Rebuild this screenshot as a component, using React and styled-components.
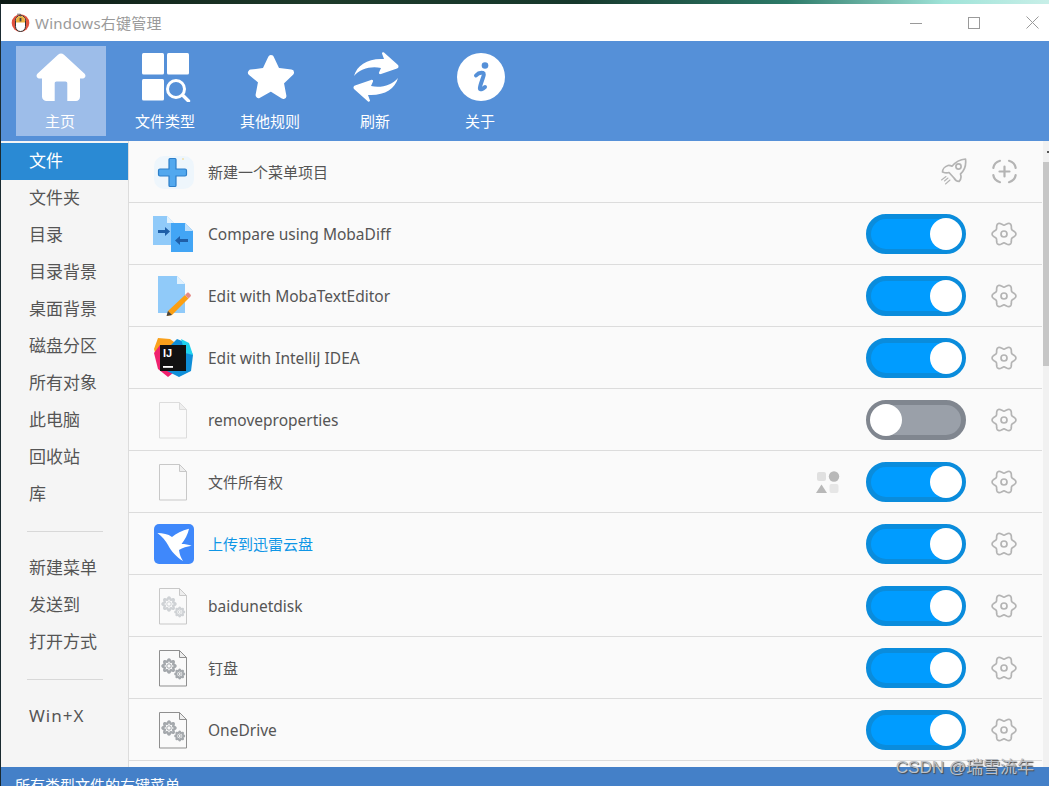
import React from "react";
import styled, { createGlobalStyle } from "styled-components";

const FONT = `"Noto Sans", "Noto Sans CJK SC", sans-serif`;

const isLatin = (s) => /^[\x00-\x7f]+$/.test(s);

const Global = createGlobalStyle`
  html, body { margin: 0; padding: 0; height: 100%; overflow: hidden; background: #10261d; }
  * { box-sizing: border-box; }
`;

const Page = styled.div`
  position: relative;
  width: 1049px;
  height: 786px;
  overflow: hidden;
  font-family: ${FONT};
  display: flex;
  flex-direction: column;
  background: #1a2a30;
`;
const Wallpaper = styled.div`
  height: 4px;
  flex: none;
  background: linear-gradient(90deg, #0c1a14 0%, #1d3a2a 30%, #16382c 55%, #2c7a68 75%, #9fe3d8 90%, #c8efe8 100%);
`;
const Win = styled.div`
  flex: 1;
  min-height: 0;
  margin-left: 1px;
  display: flex;
  flex-direction: column;
`;
const TitleBar = styled.div`
  height: 37px;
  flex: none;
  background: #fff;
  display: flex;
  align-items: center;
  padding-left: 10px;
`;
const AppTitle = styled.span`
  margin-left: 5px;
  font-size: 15px;
  letter-spacing: .25px;
  color: #9a9a9a;
`;
const WinButtons = styled.div`
  margin-left: auto;
  display: flex;
  align-items: center;
  gap: 46px;
  padding-right: 10px;
`;
const Toolbar = styled.div`
  height: 100px;
  flex: none;
  background: #5590d8;
  display: flex;
  gap: 15px;
  padding: 5px 0 0 15px;
`;
const Tool = styled.div`
  width: 90px;
  height: 90px;
  display: flex;
  flex-direction: column;
  align-items: center;
  color: #fff;
  font-size: 15px;
  padding-top: 6px;
  background: ${({ $active }) => ($active ? "#9dbde9" : "transparent")};
`;
const ToolIcon = styled.div`
  width: 50px;
  height: 50px;
  display: flex;
  align-items: center;
  justify-content: center;
`;
const ToolLabel = styled.span`
  margin: 9px 2px 0 0;
  line-height: 20px;
`;
const Body = styled.div`
  flex: 1;
  min-height: 0;
  display: flex;
  overflow: hidden;
`;
const Sidebar = styled.div`
  width: 128px;
  flex: none;
  background: #f5f5f5;
  border-right: 1px solid #dcdcdc;
  padding-top: 2px;
`;
const NavItem = styled.div`
  height: 37px;
  line-height: 35px;
  padding-left: 28px;
  font-size: 17px;
  letter-spacing: ${({ $latin }) => ($latin ? "1px" : "0")};
  color: ${({ $active }) => ($active ? "#fff" : "#555")};
  background: ${({ $active }) => ($active ? "#2a8ad4" : "transparent")};
`;
const NavRule = styled.div`
  height: 1px;
  margin: 18px 25px 18px 26px;
  background: #d8d8d8;
`;
const Content = styled.div`
  flex: 1;
  min-width: 0;
  background: #fafafa;
`;
const Row = styled.div`
  height: 62px;
  display: flex;
  align-items: center;
  border-bottom: 1px solid #dcdcdc;
  padding-left: 24px;
`;
const RowIcon = styled.div`
  width: 42px;
  height: 42px;
  flex: none;
  display: flex;
  align-items: center;
  justify-content: center;
`;
const RowText = styled.span`
  margin-left: 13px;
  font-size: ${({ $latin }) => ($latin ? "15.5px" : "15px")};
  color: ${({ $link }) => ($link ? "#0f96e6" : "#555")};
`;
const RowTail = styled.div`
  margin-left: auto;
  display: flex;
  align-items: center;
  padding-right: 25px;
`;
const Badge = styled.div`
  margin-right: 26px;
  display: flex;
`;
const RocketSlot = styled.div`
  margin-right: 25px;
  display: flex;
`;
const Toggle = styled.div`
  width: 100px;
  height: 40px;
  border-radius: 20px;
  border: 5px solid ${({ $on }) => ($on ? "#0a8cdc" : "#80868f")};
  background: ${({ $on }) => ($on ? "#009cff" : "#9aa0a9")};
  display: flex;
  align-items: center;
  justify-content: ${({ $on }) => ($on ? "flex-end" : "flex-start")};
  margin-right: 25px;
`;
const Knob = styled.div`
  width: 32px;
  height: 32px;
  border-radius: 50%;
  background: #fff;
  margin: 0 -1px;
`;
const Scrollbar = styled.div`
  width: 7px;
  flex: none;
  background: #f1f1f1;
  border-left: 1px solid #fafafa;
`;
const ScrollArrow = styled.div`
  height: 21px;
  display: flex;
  align-items: center;
  justify-content: flex-end;
  &::after {
    content: "";
    width: 2px;
    height: 2px;
    background: #555;
  }
`;
const Thumb = styled.div`
  height: 204px;
  background: #c6c6c6;
`;
const StatusBar = styled.div`
  height: 19px;
  flex: none;
  background: #4480c8;
  color: #fff;
  font-size: 15px;
  line-height: 36px;
  padding-left: 14px;
  overflow: hidden;
`;
const Watermark = styled.div`
  position: absolute;
  right: 15px;
  bottom: 8px;
  font-family: "Liberation Sans", "Noto Sans CJK SC", sans-serif;
  font-size: 17px;
  line-height: 20px;
  color: #bcc0c6;
  text-shadow: 1px 1px 1px #4a4a4a;
`;

// lobed outline, used for the settings cog and for the little gears on file icons
const cogPath = (cx, cy, r, amp, n, phase = 0) => {
  const pts = [];
  for (let i = 0; i < 120; i++) {
    const t = (i / 120) * Math.PI * 2;
    const rr = r + amp * Math.cos(n * t + phase);
    pts.push(`${(cx + rr * Math.cos(t)).toFixed(2)} ${(cy + rr * Math.sin(t)).toFixed(2)}`);
  }
  return `M${pts.join("L")}Z`;
};

const Logo = () => (
  <svg width="19" height="19" viewBox="0 0 19 19">
    <circle cx="9.500" cy="10" r="8.800" fill="#e2533f" />
    <path d="M4.500 7.500a5 5 0 0 1 10 0v6a5 5 0 0 1-10 0z" fill="#fff" stroke="#333" strokeWidth="1" />
    <path d="M5 7.500a4.500 4.500 0 0 1 9 0v2H5z" fill="#eeb23e" />
    <rect x="8.600" y="5" width="1.800" height="3.400" fill="#444" />
    <path d="M9.500 3.500V1.200H6" stroke="#555" strokeWidth=".8" fill="none" />
  </svg>
);

const HomeIcon = () => (
  <svg width="50" height="50" viewBox="0 0 50 50">
    <path
      fill="#fff"
      d="M25 1.500c1 0 2 .4 3 1.300l20.600 19c1.700 1.700.7 4.600-1.700 4.600H44v18.300c0 2.300-1.700 4.300-4 4.300h-8.700V31.400c0-1-.8-1.800-1.800-1.800h-9c-1 0-1.800.8-1.800 1.800V48.900H10c-2.300 0-4-2-4-4.300V26.400H3.100c-2.400 0-3.400-2.900-1.700-4.600L22 2.800c1-.9 2-1.300 3-1.300z"
    />
  </svg>
);
const TypesIcon = () => (
  <svg width="50" height="50" viewBox="0 0 50 50" fill="#fff">
    <rect x="1" y="1" width="22" height="21.500" rx="1.500" />
    <rect x="26" y="1" width="22" height="21.500" rx="1.500" />
    <rect x="1" y="27" width="22" height="21.500" rx="1.500" />
    <circle cx="35" cy="37" r="8.500" fill="none" stroke="#fff" strokeWidth="3" />
    <path d="M42 43.500l5.500 5.500" stroke="#fff" strokeWidth="3.400" strokeLinecap="round" />
  </svg>
);
const StarIcon = () => (
  <svg width="50" height="50" viewBox="0 0 50 50">
    <path
      fill="#fff"
      stroke="#fff"
      strokeWidth="6"
      strokeLinejoin="round"
      d="M25 6l6 12.800 14 1.800-10.200 9.600 2.600 13.800L25 36.200 12.600 43l2.600-13.800L5 20.600l14-1.800z"
    />
  </svg>
);
const arrowArc =
  "M3 24C6 13 17 6 33 7L31 1.500C31 .5 32 0 33 .5L47 13C48 14.500 47.500 16 46 16.500L30 22C28.500 22.500 27.500 21.500 28 20.500L30 16C20 13.500 9 17 3 24Z";
const RefreshIcon = () => (
  <svg width="50" height="50" viewBox="0 0 50 50" fill="#fff">
    <path d={arrowArc} />
    <path d={arrowArc} transform="rotate(180 25 25)" />
  </svg>
);
const InfoIcon = () => (
  <svg width="50" height="50" viewBox="0 0 50 50">
    <circle cx="25" cy="25" r="24" fill="#fff" />
    <circle cx="29" cy="13.500" r="3.300" fill="#5590d8" />
    <path
      d="M20 23.500c2-2.200 5-3 7-2.500 1.200.4 1 2-.3 5.500-1.200 3.500-3 8-2.800 10 .1 1.400 2.500 1 5.100-1.500"
      fill="none"
      stroke="#5590d8"
      strokeWidth="4"
      strokeLinecap="round"
    />
  </svg>
);

const PlusArt = () => (
  <svg width="42" height="42" viewBox="0 0 42 42">
    <rect x="1" y="5" width="40" height="33" rx="10" fill="#eef6fc" />
    <circle cx="30" cy="8" r="1" fill="#f2dfa8" />
    <path
      d="M17 7.500h5c.8 0 1 .5 1 1V18h9c1 0 1.500.5 1.500 1.500v4c0 1-.5 1.500-1.500 1.500h-9v9.500c0 .7-.3 1-1 1h-5c-.8 0-1-.3-1-1V25H7c-1 0-1.500-.5-1.500-1.500v-4C5.500 18.500 6 18 7 18h9V8.500c0-.5.2-1 1-1z"
      fill="#52a8ee"
      stroke="#2d7fc9"
      strokeWidth="1.200"
    />
  </svg>
);
const CompareArt = () => (
  <svg width="42" height="42" viewBox="0 0 42 42">
    <path d="M0 3h14l7 7v22H0z" fill="#90caf9" />
    <path d="M14 3l7 7h-7z" fill="#e3f2fd" />
    <path d="M18 10h14l8 8v21H18z" fill="#42a5f5" />
    <path d="M32 10l8 8h-8z" fill="#bbdefb" />
    <path d="M5 17h7v-3l5 4.500-5 4.500v-3H5z" fill="#1f5fa8" />
    <path d="M35 26h-8v-3l-5 4.500 5 4.500v-3h8z" fill="#1f5fa8" />
  </svg>
);
const EditArt = () => (
  <svg width="42" height="42" viewBox="0 0 42 42">
    <path d="M5 1h19l8 8v29H5z" fill="#90caf9" />
    <path d="M24 1l8 8h-8z" fill="#e3f2fd" />
    <path d="M15 36l17-16 3.500 3.500L19 40l-5 1z" fill="#fb9f12" />
    <path d="M32 20l2-2c.6-.6 1.400-.6 2 0l1.500 1.500c.6.6.6 1.400 0 2l-2 2z" fill="#e58a85" />
    <path d="M15 36l-1.500 5 5.500-1z" fill="#444" />
  </svg>
);
const IdeaArt = () => (
  <svg width="42" height="42" viewBox="0 0 42 42">
    <path d="M5 1l12 1 8 6-4 16-16 2-4-14z" fill="#f9a01b" />
    <path d="M1 16l6-8 14 4 4 20-10 8-10-8z" fill="#f0216e" />
    <path d="M24 2l10 4 6 12-2 16-12 6-12-6 2-24z" fill="#0f8ed8" />
    <path d="M28 2l8 4 4 12-8-2z" fill="#1fd3f0" />
    <rect x="7" y="8" width="26" height="26" fill="#111" />
    <rect x="10" y="29" width="10" height="1.800" fill="#fff" />
    <text x="10" y="20" fontFamily="Liberation Sans, sans-serif" fontWeight="700" fontSize="11" fill="#fff">IJ</text>
  </svg>
);
const FileArt = ({ line = "#c8c8c8", gears, gearColor = "#b8bcc0" }) => (
  <svg width="42" height="42" viewBox="0 0 42 42">
    <path d="M6.500 3.500h20l7 7v28.500h-27z" fill="#fafafa" stroke={line} />
    <path d="M26.500 3.500v7h7z" fill="#eee" stroke={line} />
    {gears && (
      <g fill="none" stroke={gearColor}>
        <path d={cogPath(16, 19, 5.500, 1.100, 8)} strokeWidth="2.200" />
        <circle cx="16" cy="19" r="2.200" strokeWidth="1" />
        <path d={cogPath(26.700, 27, 3.800, .8, 8)} strokeWidth="1.800" />
        <circle cx="26.700" cy="27" r="1.400" strokeWidth=".9" />
      </g>
    )}
  </svg>
);
const ThunderArt = () => (
  <svg width="40" height="40" viewBox="0 0 40 40">
    <rect width="40" height="40" rx="5" fill="#3f88fb" />
    <path
      fill="#fff"
      d="M3.400 9C9 9 14 10 18 13 22 9.500 28 6.500 35 4.700 34 10 31 15.500 27.500 20 31 20 34.500 20.500 37.600 21.700 33 22.500 28.500 23.800 25 26 25.500 30 27 34 29 37 22.500 33 17 27 14 21 12 17 8 12.500 3.400 9Z"
    />
  </svg>
);
const Rocket = () => (
  <svg width="27" height="27" viewBox="0 0 27 27" fill="none" stroke="#b4b4b4" strokeWidth="1.700" strokeLinejoin="round" strokeLinecap="round">
    <path d="M25.500 1c.8 6-1 11.500-5 15 .8 2.500.8 5.500-1.500 7.500-1.800-.2-4-1.500-5-3.500l-5-5.500c-2 .8-3.500.6-6.500-.5 0-2.500 2-5.500 5.500-6.500 1.500-.2 2.500 0 4 .7C15.500 4 20 1.500 25.500 1z" />
    <circle cx="18.500" cy="8.500" r="2.600" />
    <path d="M8 20l-3.500 3M10 22l-4.500 4M6 18.500l-4.500 3.500" strokeWidth="1.100" />
  </svg>
);
const PlusRing = () => (
  <svg width="25" height="25" viewBox="0 0 25 25" fill="none" stroke="#b4b4b4" strokeWidth="2.200" strokeLinecap="round">
    <path d="M8 1.800C4 3 1.800 5.500 1.300 9M17 1.800c4 1.200 6.200 3.700 6.700 7.200M1.300 16c.5 3.500 2.700 6 6.700 7.200M23.700 16c-.5 3.500-2.700 6-6.700 7.200" />
    <path d="M12.500 7.500v10M7.500 12.500h10" />
  </svg>
);
const Cog = () => (
  <svg width="26" height="26" viewBox="0 0 26 26" fill="none" stroke="#b4b4b4" strokeWidth="1.700">
    <path d={cogPath(13, 13, 10.400, 1.500, 6)} strokeLinejoin="round" />
    <circle cx="13" cy="13" r="3" />
  </svg>
);
const Shapes = () => (
  <svg width="24" height="24" viewBox="0 0 24 24">
    <rect x="1" y="2" width="9" height="9" rx="2" fill="#e0e0e0" />
    <circle cx="18" cy="6.500" r="5.200" fill="#b8b8b8" />
    <path d="M5.500 14.500l5.500 8.500H0z" fill="#b8b8b8" />
    <rect x="13.500" y="14" width="9" height="9" rx="2" fill="#e6e6e6" />
  </svg>
);

const tools = [
  { label: "主页", Icon: HomeIcon, active: true },
  { label: "文件类型", Icon: TypesIcon },
  { label: "其他规则", Icon: StarIcon },
  { label: "刷新", Icon: RefreshIcon },
  { label: "关于", Icon: InfoIcon },
];
const navGroups = [
  ["文件", "文件夹", "目录", "目录背景", "桌面背景", "磁盘分区", "所有对象", "此电脑", "回收站", "库"],
  ["新建菜单", "发送到", "打开方式"],
  ["Win+X"],
];
const rows = [
  { text: "Compare using MobaDiff", art: <CompareArt />, on: true },
  { text: "Edit with MobaTextEditor", art: <EditArt />, on: true },
  { text: "Edit with IntelliJ IDEA", art: <IdeaArt />, on: true },
  { text: "removeproperties", art: <FileArt line="#dcdcdc" />, on: false },
  { text: "文件所有权", art: <FileArt />, on: true, badge: true },
  { text: "上传到迅雷云盘", art: <ThunderArt />, on: true, link: true },
  { text: "baidunetdisk", art: <FileArt gears gearColor="#cfd2d5" />, on: true },
  { text: "钉盘", art: <FileArt line="#8f8f8f" gears gearColor="#a4a8ac" />, on: true },
  { text: "OneDrive", art: <FileArt line="#8f8f8f" gears gearColor="#a4a8ac" />, on: true },
];

export default function App() {
  return (
    <Page>
      <Global />
      <Wallpaper />
      <Win>
        <TitleBar>
          <Logo />
          <AppTitle>Windows右键管理</AppTitle>
          <WinButtons>
            <svg width="12" height="12"><path d="M0 6.500h12" stroke="#9a9a9a" /></svg>
            <svg width="12" height="12"><rect x=".5" y=".5" width="11" height="11" fill="none" stroke="#9a9a9a" /></svg>
            <svg width="13" height="13"><path d="M.5.500l12 12M12.500.500l-12 12" stroke="#9a9a9a" /></svg>
          </WinButtons>
        </TitleBar>
        <Toolbar>
          {tools.map(({ label, Icon, active }) => (
            <Tool key={label} $active={active}>
              <ToolIcon><Icon /></ToolIcon>
              <ToolLabel>{label}</ToolLabel>
            </Tool>
          ))}
        </Toolbar>
        <Body>
          <Sidebar>
            {navGroups.map((group, g) => (
              <React.Fragment key={g}>
                {g > 0 && <NavRule />}
                {group.map((name) => (
                  <NavItem key={name} $active={name === "文件"} $latin={isLatin(name)}>{name}</NavItem>
                ))}
              </React.Fragment>
            ))}
          </Sidebar>
          <Content>
            <Row>
              <RowIcon><PlusArt /></RowIcon>
              <RowText>新建一个菜单项目</RowText>
              <RowTail>
                <RocketSlot><Rocket /></RocketSlot>
                <PlusRing />
              </RowTail>
            </Row>
            {rows.map((r) => (
              <Row key={r.text}>
                <RowIcon>{r.art}</RowIcon>
                <RowText $link={r.link} $latin={isLatin(r.text)}>{r.text}</RowText>
                <RowTail>
                  {r.badge && <Badge><Shapes /></Badge>}
                  <Toggle $on={r.on}><Knob /></Toggle>
                  <Cog />
                </RowTail>
              </Row>
            ))}
          </Content>
          <Scrollbar>
            <ScrollArrow />
            <Thumb />
          </Scrollbar>
        </Body>
        <StatusBar>所有类型文件的右键菜单</StatusBar>
      </Win>
      <Watermark>CSDN @瑞雪流年</Watermark>
    </Page>
  );
}
